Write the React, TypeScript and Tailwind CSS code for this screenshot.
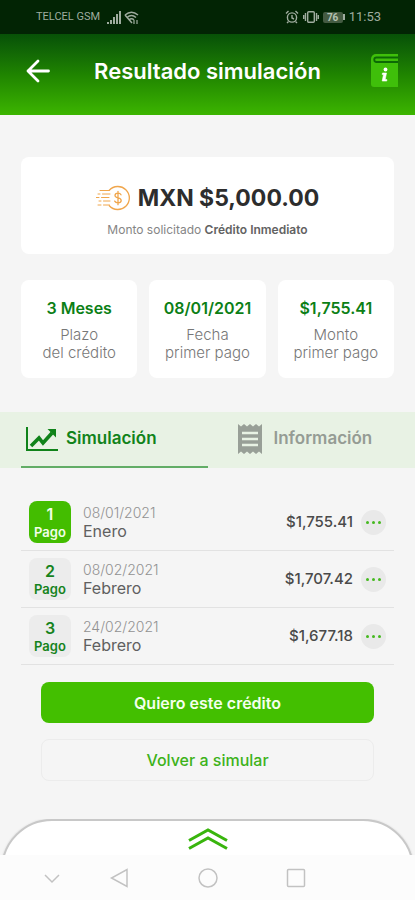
import { useState } from "react";

const summary = [
  { value: "3 Meses", lines: ["Plazo", "del crédito"] },
  { value: "08/01/2021", lines: ["Fecha", "primer pago"] },
  { value: "$1,755.41", lines: ["Monto", "primer pago"] },
];

const payments = [
  { n: 1, date: "08/01/2021", month: "Enero", amount: "$1,755.41" },
  { n: 2, date: "08/02/2021", month: "Febrero", amount: "$1,707.42" },
  { n: 3, date: "24/02/2021", month: "Febrero", amount: "$1,677.18" },
];

function StatusBar() {
  return (
    <div className="flex h-[34px] items-center justify-between bg-[#022404] pr-[34px] pl-9 font-[Roboto,sans-serif] text-[#9fac9f]">
      <div className="flex items-center gap-[3px]">
        <span className="mr-1 text-[11px]">TELCEL GSM</span>
        <svg width="14" height="13" viewBox="0 0 14 13" fill="currentColor" aria-hidden="true">
          <path d="M0 11h2v2H0zM3 9h2v4H3zM6 6h2v7H6zM9 3h2v10H9zM12 0h2v13h-2z" />
        </svg>
        <svg width="15" height="13" viewBox="0 0 15 13" fill="none" stroke="currentColor" strokeWidth="1.5" aria-hidden="true">
          <path d="M1 4C5 .5 10 .5 14 4M3 6.500c3-2.600 6-2.600 9 0M5 8.800c1.700-1.500 3.300-1.500 5 0M1 4l7 8" />
          <path d="M10 9v4M13 9v4" strokeWidth="1.200" />
        </svg>
      </div>
      <div className="flex items-center gap-1">
        <svg width="14" height="14" viewBox="0 0 14 14" fill="none" stroke="currentColor" strokeWidth="1.400" aria-hidden="true">
          <circle cx="7" cy="7.500" r="4.600" />
          <path d="M7 5v3l2 1M1 3.500 3.500 1M13 3.500 10.500 1M3.500 11.500 2 13M10.500 11.500 12 13" />
        </svg>
        <svg width="16" height="14" viewBox="0 0 16 14" fill="none" stroke="currentColor" strokeWidth="1.400" aria-hidden="true">
          <rect x="4.700" y="1.700" width="6.600" height="10.600" rx="1" />
          <path d="M2.500 3v8M.7 5v4M13.500 3v8M15.300 5v4" />
        </svg>
        <span className="flex items-center">
          <span className="flex h-[11px] w-5 items-center justify-center rounded-xs bg-[#445b42] text-[10px] font-bold text-[#b4c2b2]">76</span>
          <span className="h-[6px] w-[2px] bg-[#9fac9f]" />
        </span>
        <span className="text-[13px]">11:53</span>
      </div>
    </div>
  );
}

function Header() {
  return (
    <header className="flex h-[81px] items-center bg-linear-to-b from-[#075107] via-[#1f8400] to-[#3cb500] pr-4 pb-2 pl-6 text-white">
      <button type="button" aria-label="Regresar" className="flex h-10 w-7 items-center justify-center">
        <svg width="24" height="24" viewBox="0 0 24 24" fill="none" stroke="currentColor" strokeWidth="2.800" strokeLinecap="round" strokeLinejoin="round">
          <path d="M22.500 12H2M12 2 2 12l10 10" />
        </svg>
      </button>
      <h1 className="flex-1 pr-2 text-center text-[22px] leading-7 font-semibold">Resultado simulación</h1>
      <button type="button" aria-label="Ayuda" className="flex h-10 w-7 items-center justify-center">
        <svg width="28" height="34" viewBox="0 0 28 34">
          <path d="M5 0h22v33H3a3 3 0 0 1-3-3V5a5 5 0 0 1 5-5z" fill="#3fbf0a" />
          <path d="M27 3.500H5.500a2 2 0 0 0 0 4.500H27" fill="none" stroke="#0c6a05" strokeWidth="1.800" />
          <circle cx="14.500" cy="15.500" r="1.900" fill="#fff" />
          <path d="M11.500 19h4l-1.300 6.500h1.600v1.500h-4.600l1.300-6.500h-1.300z" fill="#fff" stroke="#fff" strokeWidth=".6" />
        </svg>
      </button>
    </header>
  );
}

function CoinIcon() {
  return (
    <svg width="34" height="26" viewBox="0 0 34 26" fill="none" stroke="#f0a64c" strokeWidth="1.300" strokeLinecap="round" aria-hidden="true">
      <path d="M13.300 5.300a11.500 11.500 0 1 1 0 15.400" />
      <path d="M25 9.800c-.6-1.200-1.700-1.600-3-1.600-1.800 0-3 .9-3 2.300 0 3.300 6.200 1.600 6.200 5 0 1.400-1.300 2.400-3.200 2.400-1.600 0-2.700-.6-3.300-1.800M22 6.300v13.400" />
      <path d="M4 5.500h9M2 9h2M6.500 9H14M0 12.500h3M5.500 12.500H13M3 16h2M7.500 16H14M2 20h3M7.500 20h6" strokeWidth="1" />
    </svg>
  );
}

function Tabs() {
  const [tab, setTab] = useState("simulacion");
  const base = "flex items-center border-b-2 text-[17px] font-semibold";
  return (
    <div role="tablist" className="grid h-14 grid-cols-2 bg-[#e8f2e4] px-[21px]">
      <button
        type="button"
        role="tab"
        aria-selected={tab === "simulacion"}
        onClick={() => setTab("simulacion")}
        className={`${base} gap-2 pl-[5px] ${tab === "simulacion" ? "border-[#62ad66] text-[#10831a]" : "border-transparent text-[#959c94]"}`}
      >
        <svg width="32" height="24" viewBox="0 0 32 24" fill="none" stroke="currentColor" aria-hidden="true">
          <path d="M1 0v23h31" strokeWidth="2" />
          <path d="m5 19 8-8 4 5 9-10" strokeWidth="3.600" />
          <path d="M21.500 2H30v8.500z" fill="currentColor" stroke="none" />
        </svg>
        Simulación
      </button>
      <button
        type="button"
        role="tab"
        aria-selected={tab === "informacion"}
        onClick={() => setTab("informacion")}
        className={`${base} gap-3 pl-[30px] ${tab === "informacion" ? "border-[#62ad66] text-[#10831a]" : "border-transparent text-[#959c94]"}`}
      >
        <svg width="24" height="30" viewBox="0 0 24 30" aria-hidden="true">
          <path d="m0 0 3 2.500L6 0l3 2.500L12 0l3 2.500L18 0l3 2.500L24 0v30l-3-2.500L18 30l-3-2.500L12 30l-3-2.500L6 30l-3-2.500L0 30z" fill="#989f97" />
          <path d="M4 9h16M4 15h16M4 21h16" stroke="#e8f2e4" strokeWidth="2.500" />
        </svg>
        Información
      </button>
    </div>
  );
}

export default function App() {
  return (
    <div className="flex min-h-screen flex-col bg-[#f5f5f5] font-[Inter,sans-serif] text-[#444]">
      <StatusBar />
      <Header />
      <main className="flex flex-col">
        <section className="mx-[21px] mt-[42px] flex h-[97px] flex-col items-center justify-center gap-2.5 rounded-lg bg-white pt-2.5">
          <div className="flex items-center gap-2">
            <CoinIcon />
            <span className="text-[23px] leading-7 font-bold text-[#2d2d2d]">MXN $5,000.00</span>
          </div>
          <p className="text-xs text-[#858585]">
            Monto solicitado <strong className="font-semibold text-[#626262]">Crédito Inmediato</strong>
          </p>
        </section>

        <section className="mx-[21px] mt-[26px] grid grid-cols-3 gap-3">
          {summary.map((item) => (
            <div key={item.value} className="flex h-[98px] flex-col items-center justify-center gap-2 rounded-lg bg-white pt-0.5 text-center">
              <strong className="text-base leading-5 font-semibold text-[#0c7f16]">{item.value}</strong>
              <p className="text-[15px] leading-[18px] font-light text-[#777]">
                {item.lines[0]}
                <br />
                {item.lines[1]}
              </p>
            </div>
          ))}
        </section>

        <div className="mt-[34px]">
          <Tabs />
        </div>

        <ul className="mx-[21px] mt-[26px]">
          {payments.map((p) => (
            <li key={p.n} className="flex h-[57px] items-center border-b border-[#e2e2e2] px-2">
              <div
                className={`flex h-[42px] w-[42px] flex-col items-center justify-center rounded-lg font-semibold ${
                  p.n === 1 ? "bg-[#43bd00] text-[#f2ffe9]" : "bg-[#ececec] text-[#16831d]"
                }`}
              >
                <span className="text-base leading-5">{p.n}</span>
                <span className="text-[13px] leading-4">Pago</span>
              </div>
              <div className="ml-3 flex-1">
                <div className="text-sm leading-[18px] font-light text-[#929292]">{p.date}</div>
                <div className="text-base leading-[18px] text-[#606060]">{p.month}</div>
              </div>
              <span className="text-[15px] font-medium text-[#4a4a4a]">{p.amount}</span>
              <button
                type="button"
                aria-label={`Detalle del pago ${p.n}`}
                className="ml-2 flex size-[25px] items-center justify-center gap-[3px] rounded-full bg-[#e9e9e9]"
              >
                <span className="size-[3px] rounded-full bg-[#45b91f]" />
                <span className="size-[3px] rounded-full bg-[#45b91f]" />
                <span className="size-[3px] rounded-full bg-[#45b91f]" />
              </button>
            </li>
          ))}
        </ul>

        <div className="mx-[41px] mt-[17px] flex flex-col gap-4">
          <button type="button" className="h-[41px] rounded-lg bg-[#43bf00] text-base font-semibold text-[#f4ffed]">
            Quiero este crédito
          </button>
          <button type="button" className="h-[42px] rounded-lg border border-[#ececec] text-base font-medium text-[#3db21a]">
            Volver a simular
          </button>
        </div>
      </main>

      <footer className="mt-auto">
        <div className="h-[36px] overflow-hidden">
          <div className="mx-px flex h-[110px] justify-center rounded-[51px] border-2 border-[#c8c8c8] bg-white pt-[7px] shadow-[0_0_2px_#ccc]">
            <button type="button" aria-label="Mostrar más" className="h-[22px]">
              <svg width="40" height="22" viewBox="0 0 40 22" fill="none" stroke="#39b50d" strokeWidth="3">
                <path d="M1 12.500 20 2l19 10.500M1 20.500 20 10l19 10.500" />
              </svg>
            </button>
          </div>
        </div>
        <nav className="flex h-[45px] items-center bg-[#fcfcfc] text-[#c2c2c2]">
          <svg className="w-full" height="24" viewBox="0 0 415 24" fill="none" stroke="currentColor" strokeWidth="1.500" aria-hidden="true">
            <path d="m45 9 7 7 7-7M127 3.500v17L111.500 12z" />
            <circle cx="208" cy="12" r="9" />
            <rect x="287.500" y="3.500" width="17" height="17" rx="1" />
          </svg>
        </nav>
      </footer>
    </div>
  );
}
